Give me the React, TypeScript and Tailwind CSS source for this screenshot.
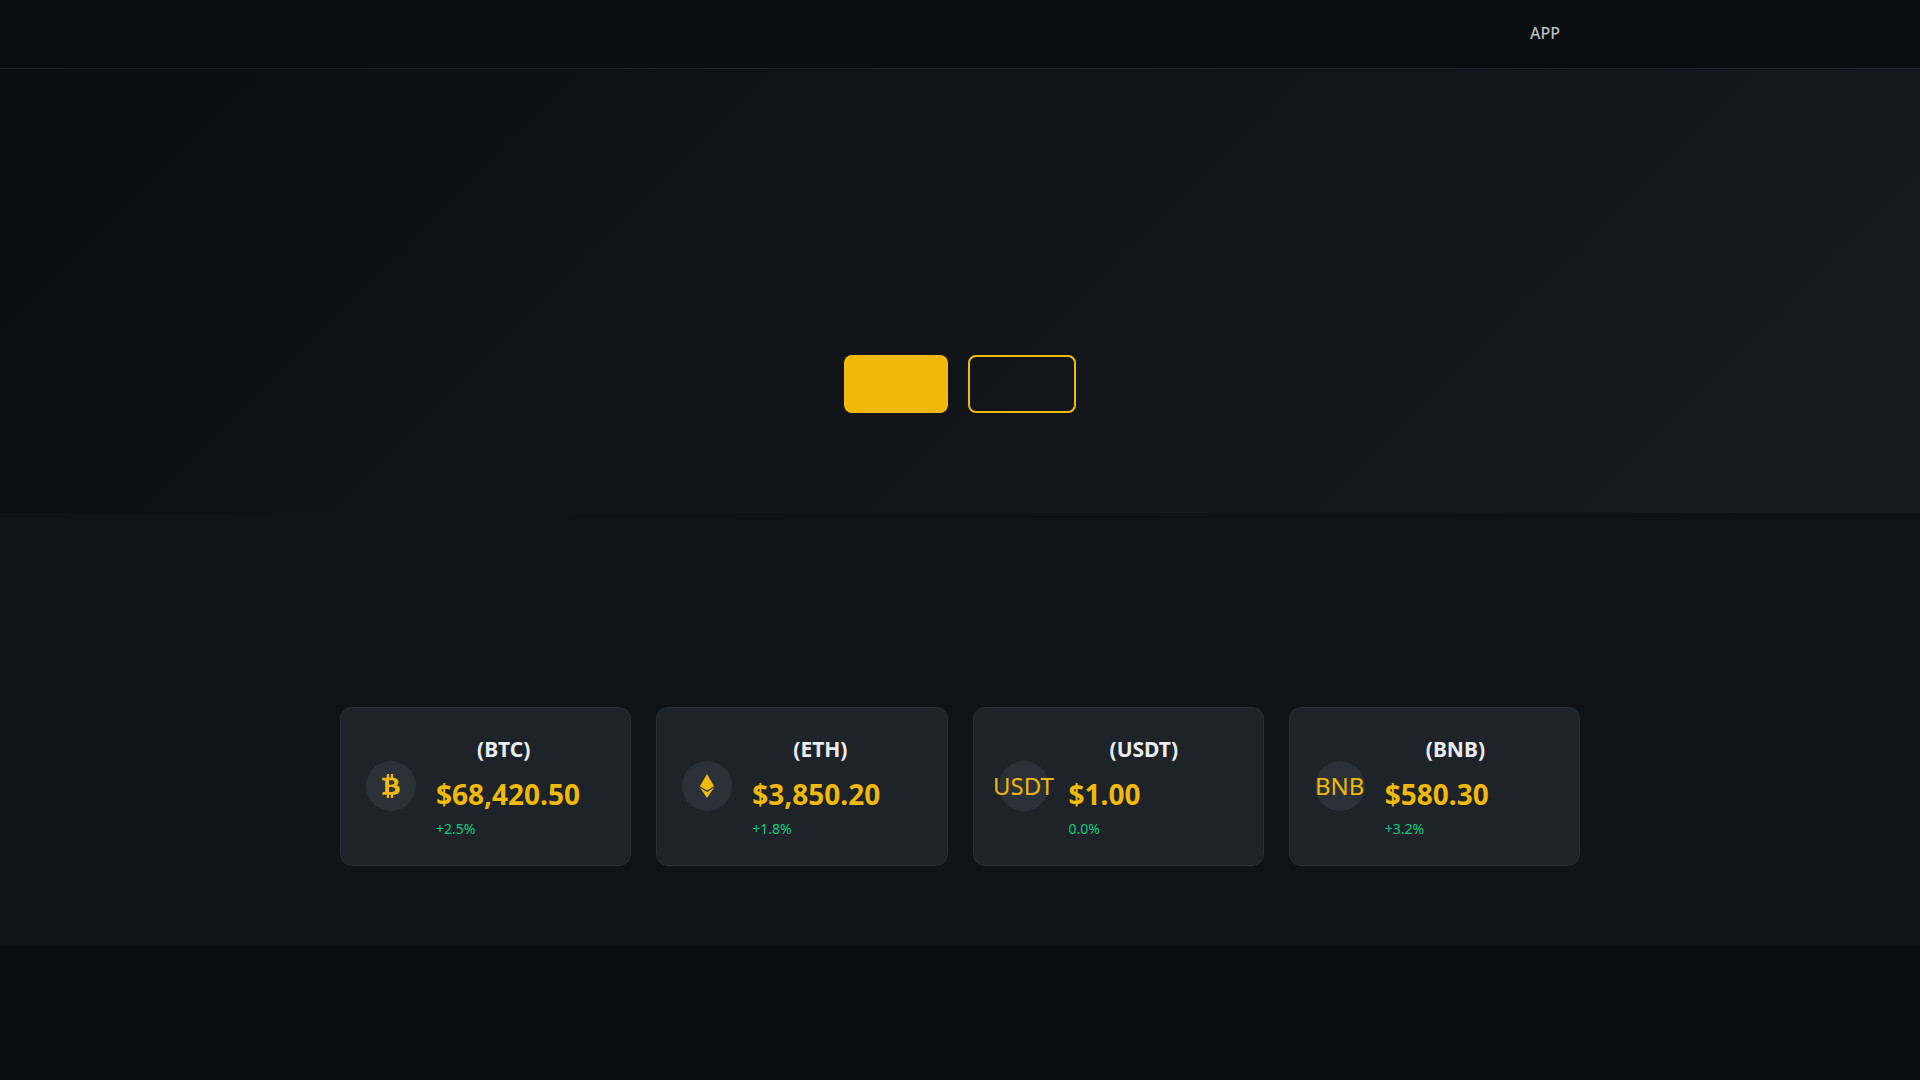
import type { ReactNode } from 'react';
import { FaBtc, FaEthereum } from 'react-icons/fa';

interface Coin {
    symbol: string;
    price: string;
    change: string;
    icon: ReactNode;
}

const coins: Coin[] = [
    { symbol: 'BTC', price: '$68,420.50', change: '+2.5%', icon: <FaBtc /> },
    { symbol: 'ETH', price: '$3,850.20', change: '+1.8%', icon: <FaEthereum /> },
    { symbol: 'USDT', price: '$1.00', change: '0.0%', icon: 'USDT' },
    { symbol: 'BNB', price: '$580.30', change: '+3.2%', icon: 'BNB' },
];

function Header() {
    return (
        <header className="border-b border-[#1e2329] bg-[#0a0e11]">
            <nav className="mx-auto flex max-w-[1280px] justify-end px-10 pt-[21px] pb-[23px]">
                <a href="#app" className="text-base/6 font-medium text-[#b7bdc6]">APP</a>
            </nav>
        </header>
    );
}

function Hero() {
    return (
        <section className="bg-linear-135 from-[#0a0e11] via-[#11151a] to-[#161a20] px-5 pt-[286px] pb-25">
            <div className="flex justify-center gap-5">
                <button type="button" className="h-[58px] rounded-lg bg-[#f0b90b] px-[52px]" />
                <button type="button" className="h-[58px] rounded-lg border-2 border-[#f0b90b] px-[52px]" />
            </div>
        </section>
    );
}

function CoinCard({ coin }: { coin: Coin }) {
    return (
        <div className="flex items-center gap-5 rounded-xl border border-[#2b3139] bg-[#1e2329] p-[25px] pb-[26px]">
            <div className="flex size-[50px] shrink-0 items-center justify-center rounded-full bg-[#2b3139] text-2xl text-[#f0b90b]">
                {coin.icon}
            </div>
            <div>
                <h3 className="mb-[10px] pl-[41px] text-[21px]/8 font-bold text-[#eaecef]">({coin.symbol})</h3>
                <div className="mb-[5px] text-[28px]/[38px] font-bold text-[#f0b90b]">{coin.price}</div>
                <div className="text-sm/[21px] text-[#0ecb81]">{coin.change}</div>
            </div>
        </div>
    );
}

export default function App() {
    return (
        <div className="min-h-screen bg-[#0a0e11] font-['Noto_Sans',sans-serif]">
            <Header />
            <main>
                <Hero />
                <section className="bg-[#0f1318] pt-[194px] pb-20">
                    <div className="mx-auto grid max-w-[1280px] grid-cols-4 gap-[25px] px-5">
                        {coins.map(coin => (
                            <CoinCard key={coin.symbol} coin={coin} />
                        ))}
                    </div>
                </section>
            </main>
        </div>
    );
}
